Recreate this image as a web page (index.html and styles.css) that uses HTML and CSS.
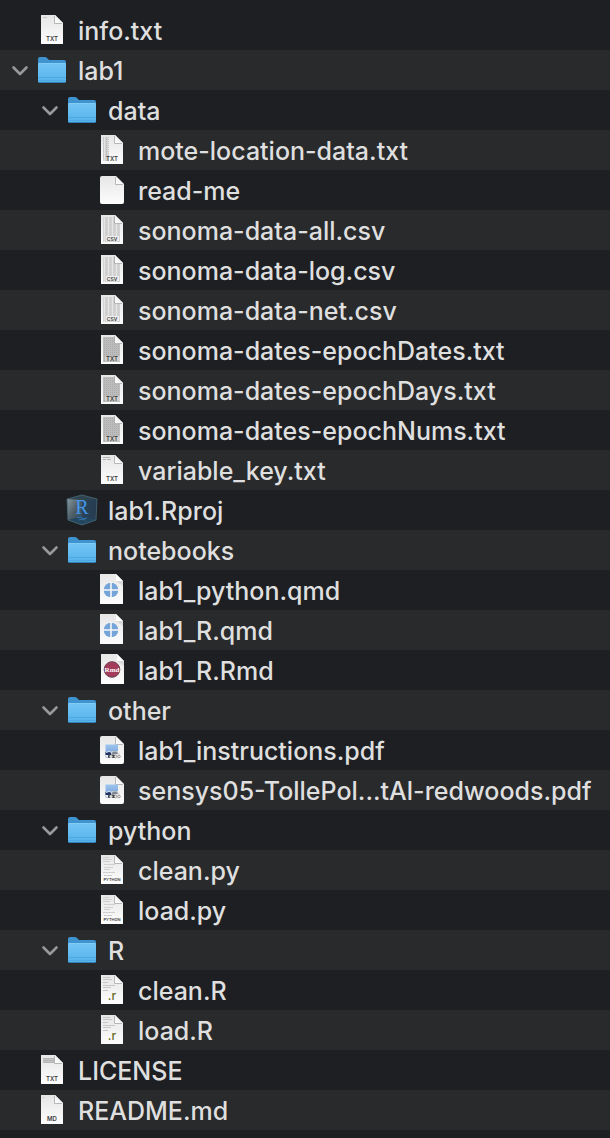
FILE: index.html
```html
<!DOCTYPE html>
<html lang="en">
<head>
<meta charset="utf-8">
<meta name="viewport" content="width=device-width, initial-scale=1">
<title>Files</title>
<link rel="stylesheet" href="styles.css">
</head>
<body>
<svg class="sprite" width="0" height="0" aria-hidden="true">
  <defs>
    <linearGradient id="paper" x1="0" y1="0" x2="0" y2="1"><stop offset="0" stop-color="#e6e6e6"/><stop offset="1" stop-color="#fdfdfd"/></linearGradient>
    <linearGradient id="fold" x1="0" y1="1" x2="1" y2="0"><stop offset="0" stop-color="#ffffff"/><stop offset="1" stop-color="#e6e6e6"/></linearGradient>
    <linearGradient id="folder-front" x1="0" y1="0" x2="0" y2="1"><stop offset="0" stop-color="#74c5f4"/><stop offset="1" stop-color="#54b3ec"/></linearGradient>
    <linearGradient id="cube-left" x1="0" y1="0" x2="1" y2="1"><stop offset="0" stop-color="#87979e"/><stop offset=".5" stop-color="#4c5c66"/><stop offset="1" stop-color="#27465f"/></linearGradient>
    <linearGradient id="cube-right" x1="0" y1="0" x2="1" y2="0"><stop offset="0" stop-color="#2a4358"/><stop offset="1" stop-color="#263c50"/></linearGradient>
    <linearGradient id="sky" x1="0" y1="0" x2="0" y2="1"><stop offset="0" stop-color="#9cc6f0"/><stop offset="1" stop-color="#7096d2"/></linearGradient>
    <pattern id="cells" width="2" height="2" patternUnits="userSpaceOnUse"><rect width="2" height="2" fill="#bdbdbd"/><rect width="1" height="1" fill="#aaaaaa"/></pattern>
    <pattern id="columns" width="4" height="2" patternUnits="userSpaceOnUse"><rect width="4" height="2" fill="#d4d4d4"/><rect width="1" height="2" fill="#e4e4e4"/><rect x="2" width="1" height="1" fill="#c6c6c6"/></pattern>
  </defs>
  <symbol id="folder" viewBox="0 0 32 32">
    <path d="M2 5q0-2 2-2h5q1 0 2 1l2 2h15q2 0 2 2v20H2z" fill="#3f93cf"/>
    <path d="M2 10q0-1 1-1h26q1 0 1 1v17q0 2-2 2H4q-2 0-2-2z" fill="url(#folder-front)"/>
    <path d="M3 9.500h26" stroke="#82cdf7"/>
    <path d="M2 23.500h28M2 26.500h28" stroke="#479fd8" stroke-opacity=".6"/>
    <path d="M3 28.500h26" stroke="#2e80ba"/>
  </symbol>
  <symbol id="page" viewBox="0 0 32 32">
    <path d="M5 1h14l8 8v21H5z" fill="url(#paper)"/>
  </symbol>
  <symbol id="corner" viewBox="0 0 32 32">
    <path d="M19 9v-8l8 8z" fill="url(#fold)"/>
    <path d="M18.500 2v7.500h7.500" fill="none" stroke="#a9a9a9" stroke-width=".8"/>
  </symbol>
  <symbol id="txt" viewBox="0 0 32 32"><use href="#page"/><path d="M7 3.500h4" stroke="#bbb" stroke-width=".8"/><use href="#corner"/></symbol>
  <symbol id="txt-column" viewBox="0 0 32 32"><use href="#page"/><path d="M7 3h6v24H7z" fill="url(#columns)"/><path d="M7.500 3v22M10.500 3v20M12.500 3v20" stroke="#aaa" stroke-opacity=".5" stroke-dasharray="1 1"/><use href="#corner"/></symbol>
  <symbol id="txt-dense" viewBox="0 0 32 32"><use href="#page"/><path d="M7 3h12v7h5v18H7z" fill="url(#cells)"/><use href="#corner"/><path d="M9 22h15v5H9z" fill="#ddd" fill-opacity=".6"/></symbol>
  <symbol id="txt-lines" viewBox="0 0 32 32"><use href="#page"/><path d="M7 3.500h7M7 5.500h3M11 5.500h4" stroke="#b4b4b4"/><use href="#corner"/></symbol>
  <symbol id="license" viewBox="0 0 32 32"><use href="#page"/><path d="M7 4h11v5H7z" fill="#b5b5b5"/><path d="M7 5.500h10M7 7.500h12" stroke="#ccc" stroke-width=".6"/><use href="#corner"/></symbol>
  <symbol id="md" viewBox="0 0 32 32"><use href="#page"/><path d="M7 3.500h1" stroke="#bbb"/><use href="#corner"/></symbol>
  <symbol id="csv" viewBox="0 0 32 32"><use href="#page"/><path d="M7 3h12v7h5v18H7z" fill="url(#columns)"/><path d="M10 22h13v5H10z" fill="#eee"/><use href="#corner"/></symbol>
  <symbol id="python" viewBox="0 0 32 32"><use href="#page"/><path d="M7 3.500h6M7 5.500h9M7 7.500h7M8 10.500h11M8 13.500h9M8 15.500h6M7 18.500h12M8 21.500h8" stroke="#cfcfcf"/><use href="#corner"/></symbol>
  <symbol id="rscript" viewBox="0 0 32 32"><use href="#page"/><path d="M7 3.500h7M7 5.500h9M7 8.500h5M7 11.500h12M7 13.500h8M7 16.500h5" stroke="#c6c6c6"/><use href="#corner"/></symbol>
  <symbol id="blank" viewBox="0 0 32 32"><path d="M6 2h14l8 8v18q0 2-2 2H6q-2 0-2-2V4q0-2 2-2z" fill="url(#paper)"/><path d="M20 2.500V10h7.500z" fill="url(#fold)"/><path d="M19.500 3v7.500H27" fill="none" stroke="#a9a9a9" stroke-width=".8"/></symbol>
  <symbol id="quarto" viewBox="0 0 32 32"><path d="M4 0h16l7 7v23H4z" fill="url(#paper)"/><path d="M20 0v7h7z" fill="#fff"/><path d="M20 7l7 0v5z" fill="#bbb" fill-opacity=".4"/><circle cx="15" cy="16" r="7.300" fill="#75a4d8"/><path d="M15 8v16M7 16h16" stroke="#f8f8f8" stroke-width="1.600"/></symbol>
  <symbol id="rmd" viewBox="0 0 32 32"><path d="M5 0h16l7 7v23H5z" fill="url(#paper)"/><path d="M21 0v7h7z" fill="#fff"/><path d="M21 7l7 0v5z" fill="#bbb" fill-opacity=".4"/><circle cx="16" cy="15.500" r="7.800" fill="#a33b5b" stroke="#6b4150"/></symbol>
  <symbol id="pdf" viewBox="0 0 32 32"><use href="#blank"/><path d="M9.500 10.500h12.500v13H9.500z" fill="url(#sky)"/><path d="M9.500 18h12.500v3H9.500z" fill="#1d2f66"/><path d="M9.500 21h12v2h-12z" fill="#e4e6ec"/><path d="M10 18.500q3-2 6 0" fill="none" stroke="#dfe6f4"/><path d="M16 17h6l2 3v4h-9v-4z" fill="#e4e4e4"/><path d="M16.500 17.500h4.500l1 2.500h-6z" fill="#7e8794"/><rect x="12" y="20.500" width="7" height="3.500" rx="1" fill="#444850"/><circle cx="15" cy="22.500" r="1.500" fill="#ddd"/><circle cx="19.500" cy="22.500" r="1.300" fill="#eee" stroke="#666" stroke-width=".6"/><circle cx="23" cy="22.500" r="1.300" fill="#eee" stroke="#666" stroke-width=".6"/></symbol>
  <symbol id="rproj" viewBox="0 0 32 32">
    <path d="M16 1l15 4-15 5L1 5z" fill="#30444f"/>
    <path d="M1 5l15 1v25L2 26z" fill="url(#cube-left)"/>
    <path d="M16 6l15-1-1 21-14 5z" fill="url(#cube-right)"/>
    <path d="M2 26l14-4 14 4-14 5z" fill="#24465f"/>
    <path d="M16 1l15 4-1 21-14 5-14-5L1 5z" fill="none" stroke="#486b7a" stroke-width=".8"/>
    <path d="M11 24l4-1 2 2 4-1M13 26l3-1 3 1" fill="none" stroke="#3574ad"/>
  </symbol>
  <symbol id="chevron" viewBox="0 0 24 24"><path d="M5.500 9.500l6.500 6.500L18.500 9.500" fill="none" stroke="#98999b" stroke-width="2.600" stroke-linecap="round" stroke-linejoin="round"/></symbol>
</svg>

<ul class="tree" role="tree" aria-label="Files">
  <li class="row level-1" role="treeitem" aria-level="1"><svg class="icon"><use href="#txt"/><text class="ext" x="16" y="27">TXT</text></svg><span class="name">info.txt</span></li>
  <li class="row folder level-1" role="treeitem" aria-level="1" aria-expanded="true"><button class="toggle" type="button" aria-label="Collapse lab1"><svg class="chevron"><use href="#chevron"/></svg></button><svg class="icon"><use href="#folder"/></svg><span class="name">lab1</span></li>
  <li class="row folder level-2" role="treeitem" aria-level="2" aria-expanded="true"><button class="toggle" type="button" aria-label="Collapse data"><svg class="chevron"><use href="#chevron"/></svg></button><svg class="icon"><use href="#folder"/></svg><span class="name">data</span></li>
  <li class="row level-3" role="treeitem" aria-level="3"><svg class="icon"><use href="#txt-column"/><text class="ext" x="16" y="27">TXT</text></svg><span class="name">mote-location-data.txt</span></li>
  <li class="row level-3" role="treeitem" aria-level="3"><svg class="icon"><use href="#blank"/></svg><span class="name">read-me</span></li>
  <li class="row level-3" role="treeitem" aria-level="3"><svg class="icon"><use href="#csv"/><text class="ext ext-csv" x="16" y="27">CSV</text></svg><span class="name">sonoma-data-all.csv</span></li>
  <li class="row level-3" role="treeitem" aria-level="3"><svg class="icon"><use href="#csv"/><text class="ext ext-csv" x="16" y="27">CSV</text></svg><span class="name">sonoma-data-log.csv</span></li>
  <li class="row level-3" role="treeitem" aria-level="3"><svg class="icon"><use href="#csv"/><text class="ext ext-csv" x="16" y="27">CSV</text></svg><span class="name">sonoma-data-net.csv</span></li>
  <li class="row level-3" role="treeitem" aria-level="3"><svg class="icon"><use href="#txt-dense"/><text class="ext" x="16" y="27">TXT</text></svg><span class="name">sonoma-dates-epochDates.txt</span></li>
  <li class="row level-3" role="treeitem" aria-level="3"><svg class="icon"><use href="#txt-dense"/><text class="ext" x="16" y="27">TXT</text></svg><span class="name">sonoma-dates-epochDays.txt</span></li>
  <li class="row level-3" role="treeitem" aria-level="3"><svg class="icon"><use href="#txt-dense"/><text class="ext" x="16" y="27">TXT</text></svg><span class="name">sonoma-dates-epochNums.txt</span></li>
  <li class="row level-3" role="treeitem" aria-level="3"><svg class="icon"><use href="#txt-lines"/><text class="ext" x="16" y="27">TXT</text></svg><span class="name">variable_key.txt</span></li>
  <li class="row level-2" role="treeitem" aria-level="2"><svg class="icon"><use href="#rproj"/><text class="ext ext-cube" x="16" y="20">R</text></svg><span class="name">lab1.Rproj</span></li>
  <li class="row folder level-2" role="treeitem" aria-level="2" aria-expanded="true"><button class="toggle" type="button" aria-label="Collapse notebooks"><svg class="chevron"><use href="#chevron"/></svg></button><svg class="icon"><use href="#folder"/></svg><span class="name">notebooks</span></li>
  <li class="row level-3" role="treeitem" aria-level="3"><svg class="icon"><use href="#quarto"/></svg><span class="name">lab1_python.qmd</span></li>
  <li class="row level-3" role="treeitem" aria-level="3"><svg class="icon"><use href="#quarto"/></svg><span class="name">lab1_R.qmd</span></li>
  <li class="row level-3" role="treeitem" aria-level="3"><svg class="icon"><use href="#rmd"/><text class="ext ext-rmd" x="16" y="18">Rmd</text></svg><span class="name">lab1_R.Rmd</span></li>
  <li class="row folder level-2" role="treeitem" aria-level="2" aria-expanded="true"><button class="toggle" type="button" aria-label="Collapse other"><svg class="chevron"><use href="#chevron"/></svg></button><svg class="icon"><use href="#folder"/></svg><span class="name">other</span></li>
  <li class="row level-3" role="treeitem" aria-level="3"><svg class="icon"><use href="#pdf"/></svg><span class="name">lab1_instructions.pdf</span></li>
  <li class="row level-3" role="treeitem" aria-level="3"><svg class="icon"><use href="#pdf"/></svg><span class="name">sensys05-TollePol...tAl-redwoods.pdf</span></li>
  <li class="row folder level-2" role="treeitem" aria-level="2" aria-expanded="true"><button class="toggle" type="button" aria-label="Collapse python"><svg class="chevron"><use href="#chevron"/></svg></button><svg class="icon"><use href="#folder"/></svg><span class="name">python</span></li>
  <li class="row level-3" role="treeitem" aria-level="3"><svg class="icon"><use href="#python"/><text class="ext ext-python" x="16" y="27">PYTHON</text></svg><span class="name">clean.py</span></li>
  <li class="row level-3" role="treeitem" aria-level="3"><svg class="icon"><use href="#python"/><text class="ext ext-python" x="16" y="27">PYTHON</text></svg><span class="name">load.py</span></li>
  <li class="row folder level-2" role="treeitem" aria-level="2" aria-expanded="true"><button class="toggle" type="button" aria-label="Collapse R"><svg class="chevron"><use href="#chevron"/></svg></button><svg class="icon"><use href="#folder"/></svg><span class="name">R</span></li>
  <li class="row level-3" role="treeitem" aria-level="3"><svg class="icon"><use href="#rscript"/><text class="ext ext-r" x="16" y="26">.r</text></svg><span class="name">clean.R</span></li>
  <li class="row level-3" role="treeitem" aria-level="3"><svg class="icon"><use href="#rscript"/><text class="ext ext-r" x="16" y="26">.r</text></svg><span class="name">load.R</span></li>
  <li class="row level-1" role="treeitem" aria-level="1"><svg class="icon"><use href="#license"/><text class="ext" x="16" y="27">TXT</text></svg><span class="name">LICENSE</span></li>
  <li class="row level-1" role="treeitem" aria-level="1"><svg class="icon"><use href="#md"/><text class="ext" x="16" y="27">MD</text></svg><span class="name">README.md</span></li>
</ul>
</body>
</html>
```
FILE: styles.css
```css
body {
  margin: 0;
  background: #1e1f23;
  color: #dfdfdf;
  font-family: Inter, "Liberation Sans", sans-serif;
  font-size: 25px;
  font-weight: 500;
  line-height: 40px;
}

.sprite {
  position: absolute;
}

.tree {
  margin: 0;
  padding: 10px 0 8px;
  list-style: none;
}

.row {
  display: flex;
  align-items: center;
  height: 40px;
  padding-left: 36px;
}

.row:nth-child(even) {
  background: #292a2c;
}

.row.level-2 { padding-left: 66px; }
.row.level-3 { padding-left: 96px; }
.row.folder.level-1 { padding-left: 8px; }
.row.folder.level-2 { padding-left: 38px; }

.toggle {
  display: flex;
  flex: none;
  margin: 0 4px 0 0;
  padding: 0;
  border: 0;
  background: none;
  cursor: pointer;
}

.chevron {
  width: 24px;
  height: 24px;
}

.icon {
  flex: none;
  width: 32px;
  height: 32px;
  margin-right: 10px;
}

.name {
  padding-top: 1px;
  white-space: nowrap;
}

.ext {
  fill: #3c3c3c;
  font-family: Inter, sans-serif;
  font-size: 6px;
  font-weight: 600;
  line-height: 1;
  text-anchor: middle;
}

.ext-csv { font-size: 5px; }
.ext-python { font-size: 4px; }
.ext-r { fill: #6b6a1c; font-size: 12px; font-weight: 500; }
.ext-rmd { fill: #fff; font-family: "Liberation Serif", serif; font-size: 7px; font-weight: 700; }
.ext-cube { fill: #4497ea; font-family: "Liberation Serif", serif; font-size: 20px; font-weight: 400; }
```
